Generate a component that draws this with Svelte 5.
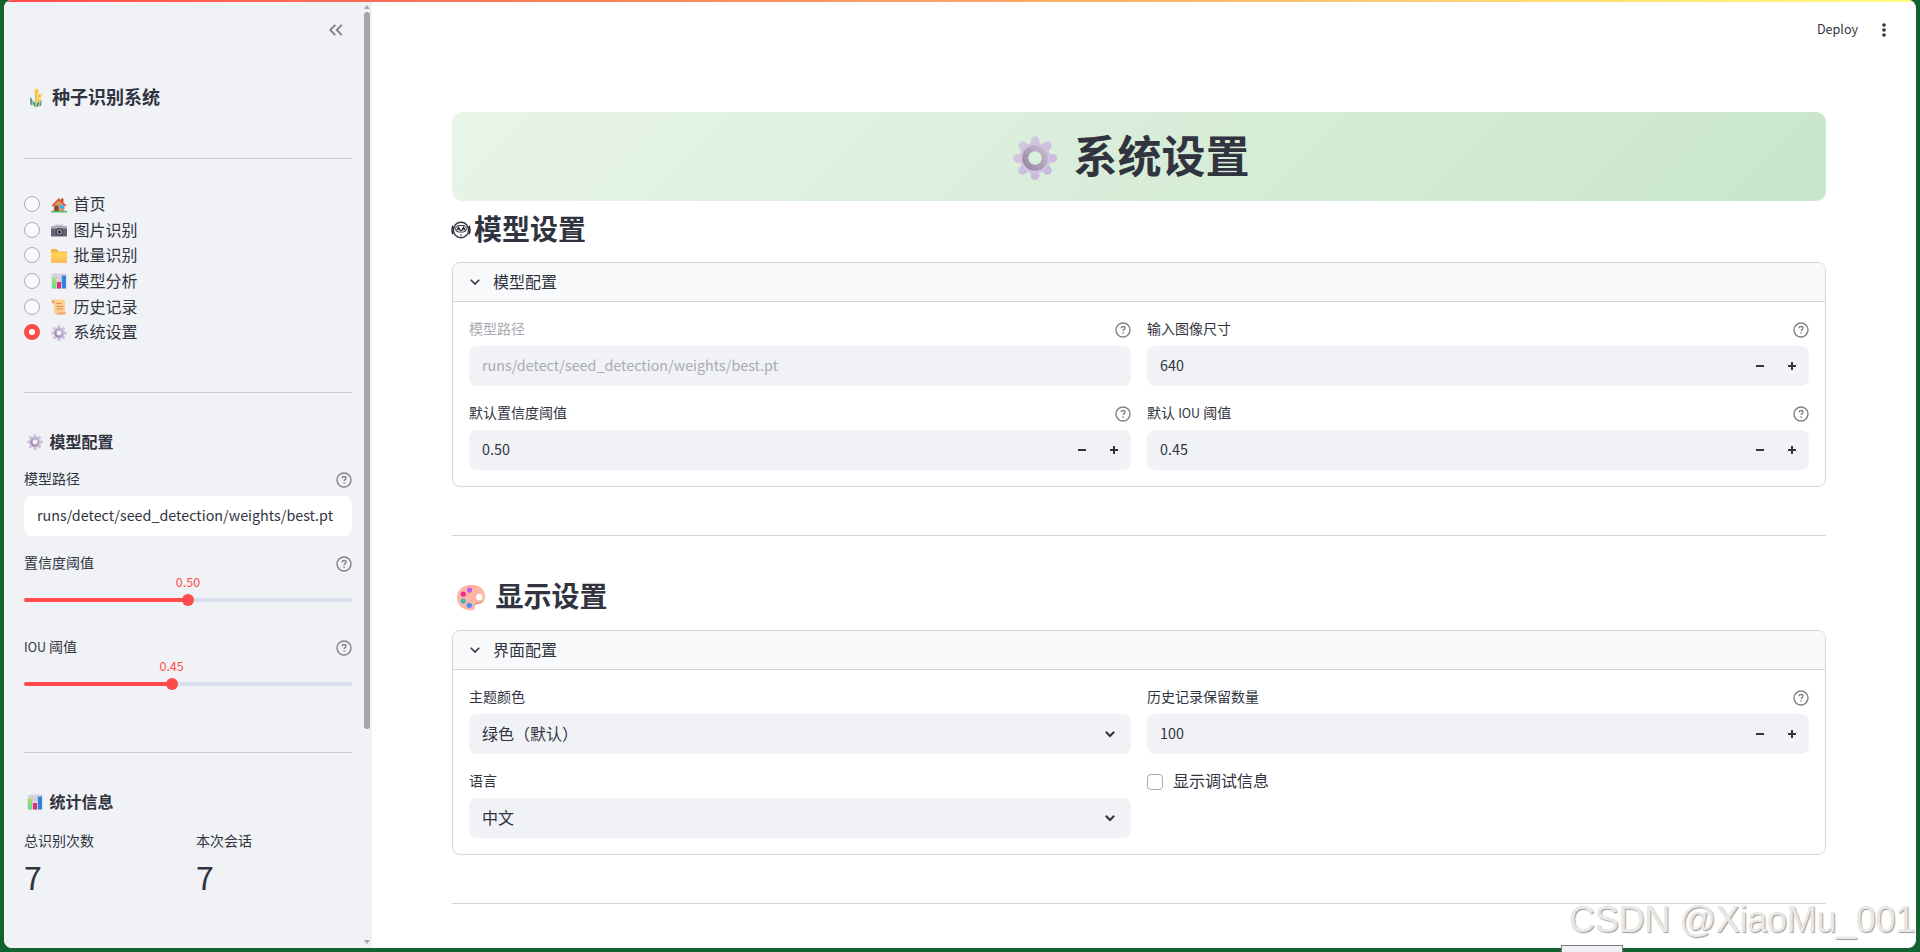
<script>
	const pages = [
		{ icon: "house", name: "首页" },
		{ icon: "camera", name: "图片识别" },
		{ icon: "folder", name: "批量识别" },
		{ icon: "chart", name: "模型分析" },
		{ icon: "scroll", name: "历史记录" },
		{ icon: "gear", name: "系统设置" }
	];

	let page = $state("系统设置");
	let modelPath = $state("runs/detect/seed_detection/weights/best.pt");
	let debug = $state(false);

	let conf = $state(0.5);
	let iou = $state(0.45);

	const stats = [
		{ label: "总识别次数", value: 7 },
		{ label: "本次会话", value: 7 }
	];
</script>

<!-- Icons -->
{#snippet emoji(name)}
	<svg class="emoji" viewBox="0 0 32 32" aria-hidden="true">
		{#if name === "house"}
			<path d="M5 14 16 5l11 9v15H5z" fill="#d99a66" />
			<path d="M20 3h5v7h-5z" fill="#b3573f" />
			<path d="M1 17 15.500 2 31 17l-3 2L15.500 7 4 19z" fill="#e2553a" />
			<path d="M7 17h8v12H7z" fill="#7d4b3c" />
			<path d="M18 16h8v7h-8z" fill="#35b5f4" />
			<path d="M0 28h32v3H0z" fill="#53b96a" />
		{:else if name === "camera"}
			<path d="M9 5h14l2 5H7z" fill="#c9c3d2" />
			<rect y="9" width="32" height="20" rx="2" fill="#6a6372" />
			<path d="M0 9h32v4H0z" fill="#b5aebe" />
			<circle cx="17" cy="20" r="8" fill="#4a4452" />
			<circle cx="17" cy="20" r="5.500" fill="#9a92a6" />
			<circle cx="17" cy="20" r="3.200" fill="#37323e" />
		{:else if name === "folder"}
			<path d="M0 4q0-2 2-2h9l4 5h15q2 0 2 2v19H0z" fill="#f5b03e" />
			<path d="M0 11q0-2 2-2h28q2 0 2 2v17q0 2-2 2H2q-2 0-2-2z" fill="url(#folderFill)" />
		{:else if name === "chart"}
			<rect x="1" y="1" width="30" height="30" rx="3" fill="#d9d5e2" />
			<path d="M10 1v30M21 1v30M1 10h30M1 20h30" stroke="#b9b1c6" stroke-width="1" />
			<path d="M2 9h8v22H2z" fill="url(#barFill)" />
			<path d="M12 18h8v13h-8z" fill="#e02c73" />
			<path d="M22 5h8v26h-8z" fill="#2c86dc" />
		{:else if name === "scroll"}
			<path d="M3 1h21q4 0 4 4v22h-3v3H9q-3 0-3-4V8H3q-3-4 0-7z" fill="#ffcf92" />
			<path d="M2 2q5 0 5 5v2H3Q0 6 2 2zM13 27h18q-1 4-5 4H9q4-1 4-4z" fill="#e9a16a" />
			<path d="M11 9h10M11 15h13M11 20h13" stroke="#d48a52" stroke-width="2" />
		{:else if name === "gear"}
			<g stroke="url(#gearFill)" stroke-width="6.200" stroke-linecap="round">
				<path d="M16 3.200v25.700M3.200 16.100h25.700M7 7l18 18M25 7 7 25" />
			</g>
			<circle cx="16" cy="16" r="11.300" fill="#d0c3df" />
			<circle cx="16" cy="16" r="7" fill="none" stroke="url(#gearRing)" stroke-width="4.600" />
			<circle class="hole" cx="16" cy="16" r="4.900" />
		{:else if name === "palette"}
			<path
				d="M16 2C7 2 0 8 0 16.500 0 25 7 31 15 31c5 0 6-2 5-4-2-4 0-5 4-5 5 0 8-3 8-7C32 7 25 2 16 2z"
				fill="#ffb5a3"
			/>
			<path d="M20 28q-2-6 4-6 6 0 8-5-1 6-8 7-4 0-4 4z" fill="#e78e83" />
			<circle cx="25.500" cy="16" r="3.700" fill="#fff" />
			<circle cx="14.300" cy="8" r="3" fill="#bd5df0" />
			<circle cx="7.200" cy="12.600" r="3" fill="#f42c91" />
			<circle cx="7.200" cy="20.600" r="3" fill="#40b8b5" />
			<circle cx="14" cy="25.500" r="3" fill="#438df5" />
		{/if}
	</svg>
{/snippet}

{#snippet help()}
	<svg class="help" viewBox="0 0 16 16" fill="none" stroke="#808288" stroke-width="1.400" aria-hidden="true">
		<circle cx="8" cy="8" r="7" />
		<path d="M6.100 6.300c.1-1.200.9-1.800 2-1.800 1.200 0 1.900.7 1.900 1.600 0 1.500-1.900 1.500-1.900 3" />
		<path d="M8.100 10.300v1.400" />
	</svg>
{/snippet}

{#snippet chevron(cls)}
	<svg class={cls} viewBox="0 0 12 12" fill="none" stroke="#31333f" aria-hidden="true">
		<path d="M1.800 3.800 6 8l4.200-4.200" />
	</svg>
{/snippet}

{#snippet numberField(label, value, latin)}
	<div class="field">
		<div class="label">
			<span>{label}{#if latin}{" "}<span class="latin">{latin}</span> 阈值{/if}</span>
			{@render help()}
		</div>
		<div class="input number">
			<span class="value">{value}</span>
			<button aria-label="减少"><svg viewBox="0 0 8 8"><path d="M0 3h8v2H0z" /></svg></button>
			<button aria-label="增加"><svg viewBox="0 0 8 8"><path d="M0 3h3V0h2v3h3v2H5v3H3V5H0z" /></svg></button>
		</div>
	</div>
{/snippet}

{#snippet selectField(label, value)}
	<div class="field">
		<div class="label"><span>{label}</span></div>
		<div class="input select">
			<span class="text">{value}</span>
			{@render chevron("arrow")}
		</div>
	</div>
{/snippet}

{#snippet slider(value)}
	<div class="slider">
		<div class="slider-value" style="left: {value * 100}%">{value.toFixed(2)}</div>
		<div class="track"><div class="fill" style="width: {value * 100}%"></div></div>
		<div class="thumb" style="left: {value * 100}%"></div>
	</div>
{/snippet}

<svg class="defs" width="0" height="0" aria-hidden="true">
	<defs>
		<linearGradient id="folderFill" x2="0" y2="1">
			<stop stop-color="#ffd84f" />
			<stop offset="1" stop-color="#ffb75e" />
		</linearGradient>
		<linearGradient id="barFill" x2="0" y2="1">
			<stop stop-color="#b2e267" />
			<stop offset="1" stop-color="#55e08b" />
		</linearGradient>
		<linearGradient id="gearFill" gradientUnits="userSpaceOnUse" x1="4" y1="2" x2="26" y2="30">
			<stop stop-color="#d5cadf" />
			<stop offset="1" stop-color="#c9b6de" />
		</linearGradient>
		<linearGradient id="gearRing" x1="1" y1="0" x2="0" y2="1">
			<stop stop-color="#c4bacb" />
			<stop offset="1" stop-color="#9a87a9" />
		</linearGradient>
	</defs>
</svg>

<div class="screen">
	<div class="app">
		<aside class="sidebar">
			<div class="sidebar-content">
				<div class="sidebar-header">
					<svg class="collapse" viewBox="0 0 14 12" fill="none" stroke="#7e8087" stroke-width="1.800" aria-hidden="true">
						<path d="M6.300.8 1.200 6l5.100 5.200M12.800.8 7.700 6l5.100 5.200" />
					</svg>
				</div>
				<h3 class="brand">
					<svg class="plant" viewBox="0 0 14 20" aria-hidden="true">
						<path d="M1 9.500v5q0 2.500 2.500 3v-5Q3.500 10 1 9.500zM12.500 12v4q0 2-2 2.500V14q.3-1.500 2-2z" fill="#5f9f82" />
						<path d="M4 13q2.500 1 2.500 6Q4 18 4 13zM10 13.500q-2.500 1-2.500 5.500 2.800 0 2.500-5.500z" fill="#3e8c70" />
						<path d="M6.900 6v13" stroke="#9cba5b" stroke-width="1.400" />
						<path d="M5 1.500 9 .8l.5 4.700L5.500 7zM7.500 7l5.300-1.500-.3 4-5 1zM6.500 10.500l6 .3-1.500 3.400-4.500-.6z" fill="#ffd25b" />
						<path d="M8 2v4M10 6v4M9 11v2.500" stroke="#f0b13e" />
					</svg>
					<span>种子识别系统</span>
				</h3>
				<hr />
				<nav>
					{#each pages as item}
						<button class="page" onclick={() => (page = item.name)}>
							<span class="radio" class:active={page === item.name}></span>
							{@render emoji(item.icon)}
							<span class="text">{item.name}</span>
						</button>
					{/each}
				</nav>
				<hr class="nav-end" />

				<h4>{@render emoji("gear")}<span>模型配置</span></h4>
				<div class="field">
					<div class="label"><span>模型路径</span>{@render help()}</div>
					<div class="input white"><span class="path">{modelPath}</span></div>
				</div>
				<div class="field">
					<div class="label"><span>置信度阈值</span>{@render help()}</div>
					{@render slider(conf)}
				</div>
				<div class="field">
					<div class="label"><span><span class="latin">IOU</span> 阈值</span>{@render help()}</div>
					{@render slider(iou)}
				</div>
				<hr class="config-end" />

				<h4>{@render emoji("chart")}<span>统计信息</span></h4>
				<div class="stats">
					{#each stats as stat}
						<div>
							<div class="label"><span>{stat.label}</span></div>
							<div class="stat-value">{stat.value}</div>
						</div>
					{/each}
				</div>
			</div>
			<div class="scrollbar">
				<svg viewBox="0 0 6 4"><path d="M3 0 6 4H0z" /></svg>
				<div class="scroll-thumb"></div>
				<svg class="down" viewBox="0 0 6 4"><path d="M0 0h6L3 4z" /></svg>
			</div>
		</aside>

		<main>
			<header>
				<span class="deploy">Deploy</span>
				<svg class="menu" viewBox="0 0 4 14" fill="#31333f" aria-hidden="true">
					<circle cx="2" cy="2" r="1.800" />
					<circle cx="2" cy="7" r="1.800" />
					<circle cx="2" cy="12" r="1.800" />
				</svg>
			</header>

			<h1>{@render emoji("gear")}<span>系统设置</span></h1>

			<h2 class="model-title">
				<svg class="robot" viewBox="0 0 20 18" fill="none" stroke="#31333f" aria-hidden="true">
					<ellipse cx="10" cy="9" rx="7.600" ry="7.800" stroke-width="1.400" />
					<path d="M2.300 5Q1 6 1 9t1.300 4M17.700 5Q19 6 19 9t-1.300 4" stroke-width="1.600" />
					<rect x="4.500" y="4.500" width="11" height="6.500" rx="3.200" />
					<path d="M6 8.700 7.500 6 9 8.700zM11 8.700 12.500 6 14 8.700zM9 9.500h2" stroke-width="1.100" />
					<path d="M9 14h2" stroke-width="1.200" />
				</svg>
				<span>模型设置</span>
			</h2>
			<section class="expander">
				<div class="summary">{@render chevron("toggle")}<span class="text">模型配置</span></div>
				<div class="grid">
					<div class="field disabled">
						<div class="label"><span>模型路径</span>{@render help()}</div>
						<div class="input"><span class="path">{modelPath}</span></div>
					</div>
					{@render numberField("输入图像尺寸", "640")}
					{@render numberField("默认置信度阈值", "0.50")}
					{@render numberField("默认", "0.45", "IOU")}
				</div>
			</section>

			<hr />

			<h2 class="display-title">{@render emoji("palette")}<span>显示设置</span></h2>
			<section class="expander">
				<div class="summary">{@render chevron("toggle")}<span class="text">界面配置</span></div>
				<div class="grid">
					{@render selectField("主题颜色", "绿色（默认）")}
					{@render numberField("历史记录保留数量", "100")}
					{@render selectField("语言", "中文")}
					<label class="check">
						<input type="checkbox" bind:checked={debug} />
						<span>显示调试信息</span>
					</label>
				</div>
			</section>

			<hr />
		</main>
		<div class="decoration"></div>
	</div>
	<div class="popup"></div>
	<div class="watermark">CSDN @XiaoMu_001</div>
</div>

<style>
	:global(body) {
		background: #11632f;
	}

	* {
		box-sizing: border-box;
	}

	.screen {
		position: relative;
		height: 952px;
		padding: 0 4px 4px;
		overflow: hidden;
		background: #11632f;
		color: #31333f;
		font-family: "Noto Sans CJK SC", sans-serif;
		font-size: 16px;
	}

	.defs {
		position: absolute;
	}

	.app {
		position: relative;
		display: flex;
		height: 948px;
		border-radius: 8px;
		background: #fff;
		overflow: hidden;
	}

	/* top colour bar */
	.decoration {
		position: absolute;
		inset: 0 0 auto;
		height: 2px;
		background: linear-gradient(90deg, #ff4b4b, #fffd80);
	}

	h1, h2, h3, h4 {
		display: flex;
		align-items: center;
		margin: 0;
		font-weight: 700;
	}

	hr {
		height: 1px;
		margin: 0;
		border: none;
		background: #d6d6d9;
	}

	button {
		padding: 0;
		border: none;
		background: none;
		color: inherit;
		font: inherit;
	}

	svg {
		flex: none;
		display: block;
	}

	.emoji {
		width: 16px;
		height: 16px;
	}

	.text {
		padding-bottom: 2px;
		line-height: 22px;
	}

	/* --- Sidebar --- */
	.sidebar {
		display: flex;
		width: 368px;
		background: #f0f2f6;
	}

	.sidebar-content {
		width: 348px;
		padding-left: 20px;
	}

	.sidebar hr {
		background: #cbcdd2;
	}

	.sidebar-header {
		display: flex;
		justify-content: flex-end;
		align-items: center;
		height: 60px;
		padding-right: 9px;
	}

	.collapse {
		width: 14px;
		height: 12px;
	}

	.brand {
		gap: 9px;
		height: 74px;
		margin-bottom: 24px;
		padding: 0 0 2px 5px;
		font-size: 18px;
	}
	.plant {
		width: 14px;
		height: 20px;
		margin-top: 4px;
	}

	nav {
		display: flex;
		flex-direction: column;
		padding-top: 32.400px;
	}

	.page {
		display: flex;
		align-items: center;
		height: 25.600px;
	}
	.page .emoji {
		margin: 1px 6.500px 0 11px;
	}

	.radio {
		width: 16px;
		height: 16px;
		border: 1px solid #a9abb3;
		border-radius: 50%;
		background: #f9f9fb;
	}
	.radio.active {
		border: 5px solid #ff4b4b;
		background: #fff;
	}

	.nav-end {
		margin-top: 47px;
	}

	h4 {
		gap: 6.500px;
		height: 75px;
		padding: 22px 0 0 3px;
		font-size: 16px;
	}
	h4 .emoji {
		margin-top: 2px;
	}

	.scrollbar {
		display: flex;
		flex-direction: column;
		align-items: center;
		width: 10px;
		margin-left: 10px;
		padding-top: 5px;
		fill: #a3a5ad;
	}
	.scrollbar svg {
		width: 6px;
		height: 4px;
	}
	.scrollbar .down {
		margin-top: 211px;
	}
	.scroll-thumb {
		width: 6px;
		height: 717px;
		margin-top: 3px;
		border-radius: 3px;
		background: #a3a5ad;
	}

	/* --- Fields --- */
	.field {
		height: 68px;
	}
	.sidebar .field {
		margin-bottom: 16px;
	}

	.label {
		display: flex;
		justify-content: space-between;
		height: 28px;
		font-size: 14px;
		line-height: 20px;
	}

	.latin {
		font-size: 12.500px;
	}

	.help {
		width: 16px;
		height: 16px;
		margin-top: 4px;
	}

	.input {
		display: flex;
		align-items: center;
		height: 40px;
		padding: 0 13px;
		border-radius: 8px;
		background: #f0f2f6;
	}
	.input.white {
		background: #fff;
	}

	.path,
	.value {
		padding-bottom: 2px;
		font-size: 14.330px;
		line-height: 20px;
	}
	.value {
		flex: 1;
	}

	.input.number {
		padding-right: 1px;
	}
	.input.number button {
		display: flex;
		justify-content: center;
		align-items: center;
		width: 32px;
		height: 38px;
	}
	.input.number svg {
		width: 8px;
		height: 8px;
		fill: #31333f;
	}

	.input.select {
		justify-content: space-between;
		padding-right: 15px;
	}
	.arrow {
		width: 12px;
		height: 12px;
		stroke-width: 2;
	}

	.disabled .label span,
	.disabled .path {
		color: #a9abb2;
	}

	/* --- Slider --- */
	.slider {
		position: relative;
		padding-top: 18px;
	}
	.track {
		height: 4px;
		border-radius: 2px;
		background: #dadfeb;
	}
	.fill {
		height: 4px;
		border-radius: 2px 0 0 2px;
		background: #ff4b4b;
	}
	.thumb {
		position: absolute;
		top: 14px;
		width: 12px;
		height: 12px;
		margin-left: -6px;
		border-radius: 50%;
		background: #ff4b4b;
	}
	.slider-value {
		position: absolute;
		top: -8px;
		transform: translateX(-50%);
		color: #ff4b4b;
		font-size: 12.500px;
		line-height: 20px;
	}

	.config-end {
		margin-top: 48px;
	}

	.stats {
		display: grid;
		grid-template-columns: 1fr 1fr;
		gap: 16px;
		padding-top: 2px;
	}
	.stat-value {
		font-size: 32px;
		line-height: 37px;
	}

	/* --- Main --- */
	main {
		flex: 1;
		padding: 0 90px 0 80px;
	}

	header {
		display: flex;
		justify-content: flex-end;
		align-items: center;
		gap: 24px;
		height: 60px;
		margin-right: -60px;
	}
	.deploy {
		padding-bottom: 2px;
		font-size: 12.550px;
		line-height: 20px;
	}
	.menu {
		width: 4px;
		height: 14px;
	}

	h1 {
		justify-content: center;
		gap: 17px;
		height: 89px;
		margin-top: 52px;
		padding-right: 16px;
		border-radius: 10px;
		background: linear-gradient(135deg, #e8f5e9, #c8e6c9);
		font-size: 44px;
		line-height: 60px;
	}
	h1 span {
		padding-bottom: 5px;
	}
	h1 .emoji {
		width: 44px;
		height: 44px;
		margin-top: 2px;
	}

	.hole {
		fill: #f0f2f6;
	}
	h1 .hole {
		fill: #daeedc;
	}

	h2 {
		font-size: 28px;
		line-height: 40px;
	}
	h2 span {
		padding-bottom: 3px;
	}
	.model-title {
		gap: 3px;
		height: 61px;
		padding-bottom: 5px;
	}
	.model-title .robot {
		width: 20px;
		height: 18px;
		margin: 2px 0 0 -1px;
	}
	.display-title {
		gap: 10.500px;
		height: 94px;
		padding: 26px 0 0 5px;
	}
	.display-title .emoji {
		width: 28px;
		height: 28px;
		margin-top: 1px;
	}

	.expander {
		border: 1px solid #d6d6d9;
		border-radius: 8px;
		margin-bottom: 48px;
		overflow: hidden;
	}

	.summary {
		display: flex;
		align-items: center;
		gap: 12px;
		height: 39px;
		padding-left: 16px;
		border-bottom: 1px solid #d6d6d9;
		background: #f8f9fb;
	}
	.toggle {
		width: 12px;
		height: 12px;
		stroke-width: 1.600;
	}

	.grid {
		display: grid;
		grid-template-columns: 1fr 1fr;
		gap: 16px;
		padding: 16px;
	}

	.check {
		display: flex;
		gap: 10px;
		line-height: 20px;
	}
	.check input {
		appearance: none;
		width: 16px;
		height: 16px;
		margin: 4px 0 0;
		border: 1px solid #a9abb3;
		border-radius: 4px;
		background: #fff;
	}
	.check input:checked {
		background: #ff4b4b;
	}

	.popup {
		position: absolute;
		left: 1561px;
		bottom: -10px;
		width: 62px;
		height: 17px;
		border: 1px solid #777b80;
		background: #f0f2f6;
	}

	.watermark {
		position: absolute;
		right: 5px;
		bottom: 12px;
		color: #e8e8e8;
		font-family: "Liberation Sans", sans-serif;
		font-size: 36px;
		letter-spacing: -0.300px;
		line-height: 40px;
		white-space: nowrap;
		text-shadow: 1px 1px 1px #9a9a9a;
	}
</style>
